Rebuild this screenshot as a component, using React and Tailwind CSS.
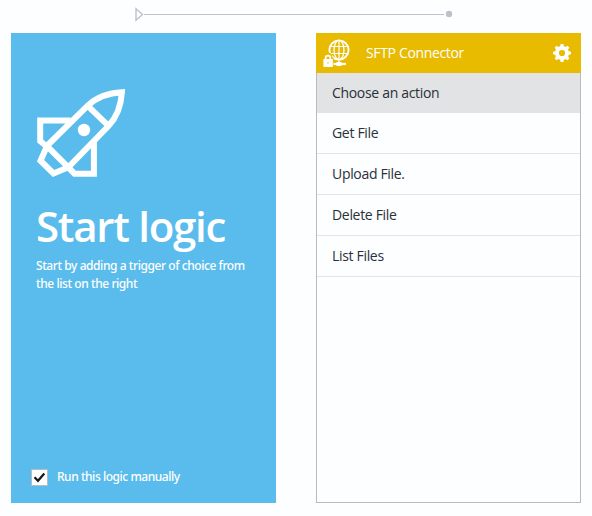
import React from 'react';

const actions = ['Get File', 'Upload File.', 'Delete File', 'List Files'];

function Rocket() {
  return (
    <svg className="block h-[90px] w-[90px]" viewBox="0 0 90 90" fill="none" stroke="#fff" strokeWidth="6">
      <path d="M10.8 58 51.7 17.6Q65 5.2 85.9 4.2Q84.600 25 72.700 37.700L32.300 79.300Z" />
      <path d="M51.500 17.600 72.500 37.800" />
      <path d="M34.500 32.600H4.200V53L10.800 58.500 4.500 72.700 17.500 85.400 32.300 79.300 38.500 85.700H57.900V54" />
      <circle cx="48" cy="42" r="6.200" fill="#fff" stroke="none" />
    </svg>
  );
}

function SecureGlobe() {
  return (
    <svg className="block h-[30px] w-[28px]" viewBox="0 0 28 30" fill="none" stroke="#fff">
      <circle cx="16" cy="12" r="9.600" strokeWidth="1.900" />
      <ellipse cx="16" cy="12" rx="5" ry="9.600" strokeWidth="1.300" />
      <path d="M16 2V25M7.500 8.500H24.500M7.500 15.500H24.500" strokeWidth="1.200" />
      <path d="M10 26H23" strokeWidth="2.200" />
      <path d="M13.500 24h5v4h-5z" fill="#fff" stroke="none" />
      <path d="M1.500 20v-1.500c0-4 7-4 7 0V20H9.700v9H.5v-9z" fill="#e8bb00" stroke="#e8bb00" strokeWidth="1.500" />
      <path d="M2.600 22v-2c0-3.300 4.800-3.300 4.800 0V22" strokeWidth="1.700" />
      <path d="M.4 21h9.400v8H.4z" fill="#fff" stroke="none" />
      <path d="M5 24.300v1.400" stroke="#e8bb00" strokeWidth="1" />
    </svg>
  );
}

function Gear() {
  return (
    <svg className="block h-[18px] w-[18px]" viewBox="-9 -9 18 18">
      <g fill="#fff">
        <path fillRule="evenodd" d="M0-7A7 7 0 1 1 0 7A7 7 0 1 1 0-7ZM0-3.100A3.100 3.100 0 1 0 0 3.100A3.100 3.100 0 1 0 0-3.100Z" />
        {[0, 45, 90, 135, 180, 225, 270, 315].map((angle) => (
          <path key={angle} d="M-2-6.300L-1.300-9H1.300L2-6.300Z" transform={`rotate(${angle})`} />
        ))}
      </g>
    </svg>
  );
}

export default function App() {
  return (
    <div className="h-[516px] w-[592px] overflow-hidden bg-[#fdfeff] font-['Open_Sans','Noto_Sans',sans-serif]">
      <div className="flex h-[33px] pt-[7px] pl-[134px]">
        <svg className="block h-[15px] w-[320px]" viewBox="0 0 320 15" fill="none" stroke="#bfc0ca">
          <path d="M2 1.700V13.300L8.500 7.500Z" strokeWidth="1.400" />
          <path d="M10 7.500H310" />
          <circle cx="315" cy="7" r="3.200" fill="#bfc0ca" stroke="none" />
        </svg>
      </div>
      <div className="flex gap-[40px] pl-[11px]">
        <section className="flex h-[470px] w-[265px] flex-col bg-[#5abcec] text-white">
          <div className="pt-[55px] pl-[25px]"><Rocket /></div>
          <h1 className="mt-[20px] pl-[25px] text-[42px] leading-[56px] font-semibold tracking-[-1.25px] whitespace-nowrap">Start logic</h1>
          <p className="mt-[3px] pl-[25px] font-['Noto_Sans',sans-serif] text-[12px] leading-[18px] font-medium tracking-[-0.43px] whitespace-nowrap">
            Start by adding a trigger of choice from<br />
            the list on the right
          </p>
          <label className="mt-auto mb-[17px] flex h-[18px] items-center pl-[20px] font-['Noto_Sans',sans-serif] text-[12px] font-medium">
            <span className="flex size-[17px] items-center justify-center border border-[#b7bcc0] bg-white">
              <svg className="size-[13px]" viewBox="0 0 13 13" fill="none" stroke="#15191d" strokeWidth="2.200">
                <path d="M1.500 6.200 5 9.800 11.300 2.500" />
              </svg>
            </span>
            <span className="ml-[9px] tracking-[-0.46px] whitespace-nowrap">Run this logic manually</span>
          </label>
        </section>
        <section className="flex h-[470px] w-[265px] flex-col">
          <header className="flex h-[40px] shrink-0 items-center bg-[#e8bb00] pr-[10px] pl-[7px] text-[14px] text-white">
            <SecureGlobe />
            <span className="ml-[15px] flex-1 pb-[2px] tracking-[-0.35px]">SFTP Connector</span>
            <Gear />
          </header>
          <div className="flex-1 border border-t-0 border-[#b9babe] text-[14px] tracking-[-0.32px] text-[#293039]">
            <div className="flex h-[40px] items-center bg-[#e2e3e5] pb-[2px] pl-[15px]">Choose an action</div>
            {actions.map((action) => (
              <div key={action} className="flex h-[41px] items-center border-b border-[#e2e4e8] pb-[2px] pl-[15px]">{action}</div>
            ))}
          </div>
        </section>
      </div>
    </div>
  );
}
